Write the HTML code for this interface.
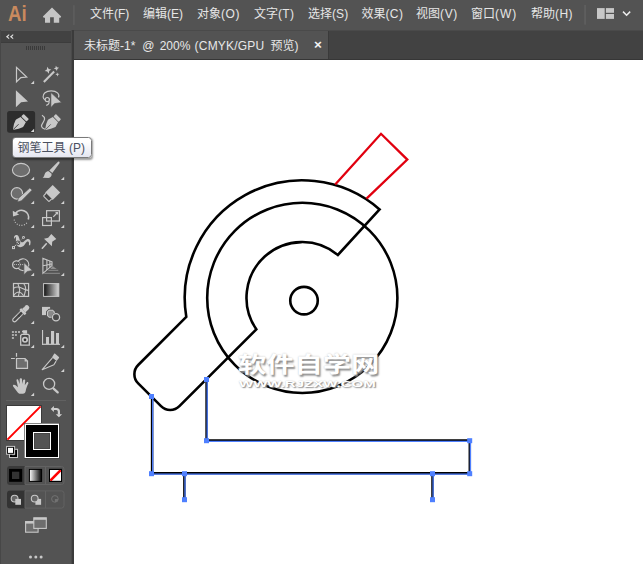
<!DOCTYPE html>
<html lang="zh-CN">
<head>
<meta charset="utf-8">
<title>未标题-1* @ 200% (CMYK/GPU 预览)</title>
<style>
html,body{margin:0;padding:0;}
body{width:643px;height:564px;overflow:hidden;background:#fff;position:relative;
 font-family:"Liberation Sans","Noto Sans CJK SC",sans-serif;}
.abs{position:absolute;}
#menubar{left:0;top:0;width:643px;height:30px;background:#535353;}
#tabbar{left:0;top:30px;width:643px;height:30px;background:#424242;}
#tabline{left:74px;top:59px;width:569px;height:1px;background:#363636;}
#tab{left:74px;top:31px;width:254px;height:28px;background:#535353;}
#tabsep{left:328px;top:31px;width:1px;height:28px;background:#3a3a3a;}
#tools{left:0;top:30px;width:72px;height:534px;background:#535353;}
#toolhead{left:0;top:31px;width:72px;height:11px;background:#424242;}
#toolheadline{left:0;top:42px;width:72px;height:1px;background:#3c3c3c;}
#toolleft{left:0;top:30px;width:1px;height:534px;background:#474747;}
#toolright1{left:71px;top:30px;width:1px;height:534px;background:#4a4a4a;}
#toolright2{left:72px;top:30px;width:2px;height:534px;background:#3b3b3b;}
#topline{left:0;top:30px;width:643px;height:1px;background:#4a4a4a;}
.menu{position:absolute;top:0;height:30px;line-height:28px;font-size:12px;color:#e6e6e6;white-space:nowrap;}
#title{left:84px;top:33px;height:28px;line-height:27px;font-size:12px;color:#e8e8e8;white-space:nowrap;width:230px;}
#title span{position:absolute;top:0;}
#close{left:312px;top:31px;width:12px;height:28px;line-height:27px;font-size:13.5px;color:#f4f4f4;text-align:center;font-weight:bold;}
#ai{left:8.4px;top:0;height:30px;line-height:27px;font-size:22px;color:#c98a5e;transform-origin:0 50%;transform:scaleX(0.85);font-weight:bold;}
#tip{left:12px;top:137.3px;width:77.5px;height:18.7px;background:linear-gradient(#ffffff 20%,#e5e6f0);border:1px solid #7a7a7a;border-radius:3.5px;
 box-shadow:1px 1.5px 2px rgba(0,0,0,0.4);font-size:12px;line-height:19.5px;color:#4a5060;white-space:nowrap;}
#tip span{position:absolute;left:4.6px;top:0.4px;}
#wm1{left:238.2px;top:350px;font-size:22px;line-height:30px;color:#fff;white-space:nowrap;transform-origin:0 0;transform:scaleX(1.283);
 text-shadow:1.2px 1.5px 1.5px #8f8f8f,0 0 1.5px #c4c4c4;font-weight:700;}
#wm2{left:239.3px;top:377.6px;font-size:9px;line-height:12px;color:#fff;white-space:nowrap;transform-origin:0 0;transform:scaleX(1.667);
 text-shadow:0.8px 1px 1px #8f8f8f,0 0 1.2px #c4c4c4;font-weight:bold;}
svg{position:absolute;left:0;top:0;}
</style>
</head>
<body>
<div class="abs" id="menubar"></div>
<div class="abs" id="tabbar"></div>
<div class="abs" id="topline"></div>
<div class="abs" id="tab"></div>
<div class="abs" id="tabsep"></div>
<div class="abs" id="tabline"></div>
<div class="abs" id="tools"></div>
<div class="abs" id="toolhead"></div>
<div class="abs" id="toolheadline"></div>
<div class="abs" id="toolleft"></div>
<div class="abs" id="toolright1"></div>
<div class="abs" id="toolright2"></div>

<div class="abs" id="ai">Ai</div>
<div class="menu" style="left:90px">文件<span style="letter-spacing:0px">(F)</span></div>
<div class="menu" style="left:143px">编辑<span style="letter-spacing:0px">(E)</span></div>
<div class="menu" style="left:197px">对象<span style="letter-spacing:0.6px">(O)</span></div>
<div class="menu" style="left:254px">文字<span style="letter-spacing:0.3px">(T)</span></div>
<div class="menu" style="left:308px">选择<span style="letter-spacing:0.1px">(S)</span></div>
<div class="menu" style="left:361.5px">效果<span style="letter-spacing:0.35px">(C)</span></div>
<div class="menu" style="left:416.1px">视图<span style="letter-spacing:0.6px">(V)</span></div>
<div class="menu" style="left:471.1px">窗口<span style="letter-spacing:0.9px">(W)</span></div>
<div class="menu" style="left:531px">帮助<span style="letter-spacing:0.45px">(H)</span></div>
<div class="abs" id="title"><span style="left:0">未标题-1*</span> <span style="left:58.2px">@</span> <span style="left:75.7px">200%</span> <span style="left:110.6px;letter-spacing:0.2px">(CMYK/GPU</span> <span style="left:186.4px">预览)</span></div>
<div class="abs" id="close">×</div>

<!-- ARTWORK -->
<svg id="art" width="643" height="564" viewBox="0 0 643 564" fill="none">
 <g stroke="#000" stroke-width="2.6" fill="none" stroke-linejoin="miter">
  <circle cx="302.3" cy="297.9" r="95.1"/>
  <circle cx="304" cy="300.6" r="13.75"/>
  <path d="M186.3 316.9 A117.5 117.5 0 0 1 379.6 209.4 L337.9 255.0 A55.7 55.7 0 0 0 256.3 329.3 L179.4 406.2 A13 13 0 0 1 161.0 406.2 L138.2 383.4 A13 13 0 0 1 138.2 365.0 Z"/>
  <path stroke-width="2.5" d="M206.6 380 V440.6 H469.8 V473.3 H152.1 V396.5 M184.4 473.3 V499.5 M432.5 473.3 V499.5"/>
 </g>
 <path d="M335.2 184.6 L381 133.8 L407.3 159.6 L366.5 198.7" stroke="#e1000f" stroke-width="2.3" fill="none"/>
 <g stroke="#4f80ff" stroke-width="1.3" fill="none" transform="translate(0.6 0.8)">
  <path d="M206.6 380 V440.6 H469.8 V473.3 H152.1 V396.5 M184.4 473.3 V499.5 M432.5 473.3 V499.5"/>
 </g>
 <g fill="#4f80ff">
  <rect x="204" y="377" width="5" height="5"/>
  <rect x="204" y="438.2" width="5" height="5"/>
  <rect x="467.2" y="438.2" width="5" height="5"/>
  <rect x="467.2" y="471.2" width="5" height="5"/>
  <rect x="149" y="471.2" width="5" height="5"/>
  <rect x="149" y="394" width="5" height="5"/>
  <rect x="182" y="471.2" width="5" height="5"/>
  <rect x="182" y="497.2" width="5" height="5"/>
  <rect x="430" y="471.2" width="5" height="5"/>
  <rect x="430" y="497.2" width="5" height="5"/>
 </g>
</svg>

<div class="abs" id="wm1">软件自学网</div>
<div class="abs" id="wm2">WWW.RJZXW.COM</div>

<!-- UI ICONS -->
<svg id="ui" width="643" height="564" viewBox="0 0 643 564" fill="none">
 <!-- menubar icons -->
 <path fill="#c6c6c6" d="M52 7.5 L61.2 16.5 L60.4 17.7 L59.2 17.7 L59.2 22.7 L53.8 22.7 L53.8 17.2 L50.1 17.2 L50.1 22.7 L45 22.7 L45 17.7 L43.7 17.7 L42.9 16.5 Z"/>
 <rect x="73.3" y="5.3" width="1.2" height="19.6" fill="#626262"/>
 <rect x="584.4" y="5" width="1.4" height="19.6" fill="#626262"/>
 <g fill="#c8c8c8">
  <rect x="597" y="8.1" width="7.7" height="10.8"/>
  <rect x="605.9" y="8.1" width="8.1" height="4.7"/>
  <rect x="605.9" y="14" width="8.1" height="4.9"/>
 </g>
 <path d="M623 11.6 L626.6 15.2 L630.2 11.6" stroke="#ececec" stroke-width="1.5" fill="none"/>
 <!-- collapse chevrons + grip -->
 <path d="M9.2 34.1 L5.9 36.7 L9.2 39.3 L9.2 37.9 L7.8 36.7 L9.2 35.5 Z M13.2 34.1 L9.9 36.7 L13.2 39.3 L13.2 37.9 L11.8 36.7 L13.2 35.5 Z" fill="#dedede"/>
 <g fill="#3a3a3a">
  <rect x="26" y="46" width="1" height="4"/><rect x="28" y="46" width="1" height="4"/><rect x="30" y="46" width="1" height="4"/><rect x="32" y="46" width="1" height="4"/><rect x="34" y="46" width="1" height="4"/>
  <rect x="36" y="46" width="1" height="4"/><rect x="38" y="46" width="1" height="4"/><rect x="40" y="46" width="1" height="4"/><rect x="42" y="46" width="1" height="4"/><rect x="44" y="46" width="1" height="4"/>
 </g>

 <!-- flyout triangles -->
 <g fill="#d2d2d2">
  <path d="M34.1 80.7V84H30.8Z"/><path d="M34.1 128.7V132H30.8Z"/>
  <path d="M34.1 176.7V180H30.8Z"/><path d="M64.2 176.7V180H60.9Z"/>
  <path d="M34.1 200.7V204H30.8Z"/><path d="M64.2 200.7V204H60.9Z"/>
  <path d="M34.1 224.7V228H30.8Z"/><path d="M64.2 224.7V228H60.9Z"/>
  <path d="M34.1 248.7V252H30.8Z"/><path d="M64.2 248.7V252H60.9Z"/>
  <path d="M34.1 272.7V276H30.8Z"/><path d="M64.2 272.7V276H60.9Z"/>
  <path d="M34.1 320.7V324H30.8Z"/>
  <path d="M34.1 344.7V348H30.8Z"/><path d="M64.2 344.7V348H60.9Z"/>
  <path d="M64.2 368.7V372H60.9Z"/>
  <path d="M34.1 392.7V396H30.8Z"/>
 </g>

 <!-- row1: selection, magic wand -->
 <path d="M16.5 67.3 L16.5 81.8 L20.9 77.6 L26.7 77.1 Z" stroke="#c8c8c8" stroke-width="1.2" stroke-linejoin="miter"/>
 <g fill="#c8c8c8">
  <path d="M43.1 81.3 L53.4 70.8 L54.9 72.3 L44.6 82.8 Z"/>
  <path d="M48 66.6 L49 69.2 L51.4 70.2 L49 71.2 L48 73.8 L47 71.2 L44.6 70.2 L47 69.2 Z" transform="rotate(-12 48 70.2)"/>
  <path d="M56.4 65.6 L57.2 67.5 L59.1 68.3 L57.2 69.1 L56.4 71 L55.6 69.1 L53.7 68.3 L55.6 67.5 Z" transform="rotate(-12 56.4 68.3)"/>
  <path d="M57.4 72.2 L58 73.8 L59.6 74.4 L58 75 L57.4 76.6 L56.8 75 L55.2 74.4 L56.8 73.8 Z" transform="rotate(-12 57.4 74.4)"/>
 </g>
 <!-- row2: direct select, lasso -->
 <path d="M15.9 90.3 L15.9 107.2 L21.1 102.2 L28 101.4 Z" fill="#c8c8c8"/>
 <g stroke="#c8c8c8" stroke-width="1.2" fill="none">
  <path d="M58.5 97.5 C60 94 56.8 90.9 51.2 90.9 C45.6 90.9 42.8 94 43.1 97 C43.3 98.6 44.2 99.6 45.2 99.8"/>
  <circle cx="47.3" cy="99.6" r="2.1"/>
  <path d="M48.9 101.2 C49.6 103.2 48.2 104.9 46.2 105.4"/>
 </g>
 <path d="M50.9 92.6 L50.9 107.5 L54.6 103.6 L61.6 102.5 Z" fill="#c8c8c8" stroke="#535353" stroke-width="0.6"/>
 <!-- row3: pen (selected), curvature -->
 <rect x="7.1" y="111" width="28" height="21.8" rx="2.5" fill="#2d2d2d"/>
 <g transform="translate(13.2 129.6) rotate(-45)" fill="#c8c8c8">
  <path d="M0.2 -0.5 Q4.6 -4 8.3 -5 Q9 -5.3 9.7 -5 L14.2 -3.7 L14.2 3.7 L9.7 5 Q9 5.3 8.3 5 Q4.6 4 0.2 0.5 Z"/>
  <rect x="15" y="-3.7" width="3.5" height="7.4" rx="0.8"/>
  <path d="M0.5 0 L7.6 0" stroke="#2d2d2d" stroke-width="0.8"/>
 </g>
 <path d="M34.1 128.7V132H30.8Z" fill="#d8d8d8"/>
 <g transform="translate(45.4 129.7) rotate(-45)" fill="#c8c8c8">
  <path d="M0.2 -0.5 Q4.6 -4 8.3 -5 Q9 -5.3 9.7 -5 L14.2 -3.7 L14.2 3.7 L9.7 5 Q9 5.3 8.3 5 Q4.6 4 0.2 0.5 Z"/>
  <rect x="15" y="-3.7" width="3.5" height="7.4" rx="0.8"/>
  <path d="M0.5 0 L7.6 0" stroke="#535353" stroke-width="0.8"/>
 </g>
 <path d="M42 115.3 C43.5 116.2 44.8 117.2 44.6 119 C44.2 122 41.3 124 41.5 126.2 C41.7 128 43.5 128.7 45 129.3" stroke="#c8c8c8" stroke-width="1.2"/>
 <!-- row4: ellipse, brush -->
 <ellipse cx="21" cy="170" rx="8.6" ry="6.6" fill="#6e6e6e" stroke="#c8c8c8" stroke-width="1.1"/>
 <g fill="#c8c8c8">
  <path d="M58.8 161.6 C59.6 161.8 59.8 162.8 59.3 163.6 L52.3 173 L49.3 170.5 L57.5 162.2 C58 161.7 58.4 161.5 58.8 161.6 Z"/>
  <path d="M48.7 171.2 L51.6 173.8 C52 175.9 50.6 177.9 48.5 177.9 L42.6 177.7 C44.5 176.5 44.2 174.6 45.2 173 C46.1 171.6 47.5 171.1 48.7 171.2 Z"/>
 </g>
 <!-- row5: shaper, eraser -->
 <circle cx="16.9" cy="193.4" r="5.7" fill="#6e6e6e" stroke="#c8c8c8" stroke-width="1.2"/>
 <path d="M29.8 187.9 L32.2 190.1 L21.6 200.7 L17.5 202.1 L18.2 198.4 Z" fill="#c8c8c8" stroke="#535353" stroke-width="0.7"/>
 <g transform="translate(52.7 192.4) rotate(-45)">
  <rect x="-5.3" y="-5.3" width="10.6" height="10.6" fill="#c8c8c8"/>
  <path d="M-5.3 -4.1 L-8.2 -4.1 Q-9.2 -4.1 -9.2 -3.1 L-9.2 2.9 Q-9.2 3.9 -8.2 3.9 L-5.3 3.9" fill="#474747" stroke="#c8c8c8" stroke-width="1.1"/>
 </g>
 <!-- row6: rotate, scale -->
 <path d="M15.4 213.6 A7.2 7.2 0 0 1 28.3 219.6" stroke="#c8c8c8" stroke-width="1.7"/>
 <path d="M12.8 210.7 L13 216.4 L19.2 214.6 Z" fill="#c8c8c8"/>
 <path d="M14.2 219.6 A7.2 7.2 0 0 0 27.4 222" stroke="#c8c8c8" stroke-width="1.1" stroke-dasharray="1 1.5"/>
 <g stroke="#c8c8c8" stroke-width="1.2">
  <rect x="46.6" y="210.7" width="12.8" height="10.3"/>
  <rect x="42.6" y="217.6" width="8.8" height="7.9"/>
  <path d="M53.3 216.8 L57 213"/>
 </g>
 <path d="M55 212 L58.1 212 L58.1 215.1 Z" fill="#c8c8c8"/>
 <!-- row7: width, pin -->
 <path fill="#c8c8c8" d="M14 238.4 C13.7 236 15.2 234.7 16.7 235 C19.2 235.5 19.2 239 20.2 241 C21.2 243 23 242.5 25 240.4 C26.6 238.8 28.8 238.2 30 240 C31 241.5 30.5 243.5 30.1 245.2 L28.9 245.2 C29.2 243.2 29 241.6 27.8 241.6 C26 241.6 25.5 244.3 23.5 246 C21.5 247.7 18 247.6 16.6 245 C15.2 242.2 16.6 238 15.5 237 C15 236.6 14.8 237.6 14.7 238.6 Z"/>
 <path d="M13.4 247.5 L23.4 237.5" stroke="#c8c8c8" stroke-width="0.9"/>
 <path d="M19.5 241.2 L22.5 238.3" stroke="#4a4a4a" stroke-width="0.9"/>
 <circle cx="17.9" cy="242.9" r="1.9" fill="#c8c8c8" stroke="#3c3c3c" stroke-width="0.9"/>
 <path d="M16.7 244.1 L19.1 241.7" stroke="#3c3c3c" stroke-width="0.9"/>
 <rect x="12" y="246.1" width="3" height="3" fill="#c8c8c8"/><rect x="13" y="247.1" width="1" height="1" fill="#555"/>
 <circle cx="23.5" cy="237.4" r="1.4" fill="#c8c8c8"/><circle cx="23.5" cy="237.4" r="0.5" fill="#555"/>
 <path d="M51.3 233.9 L56.3 238.9 L52.2 241.8 L51.9 246.2 L44 238.8 L48.2 237.8 Z" fill="#c8c8c8"/>
 <path d="M46.3 243.8 L42.3 248.2" stroke="#c8c8c8" stroke-width="1.6" stroke-linecap="round"/>
 <!-- row8: shape builder, perspective grid -->
 <circle cx="16.4" cy="264.7" r="3.9" stroke="#8c8c8c" stroke-width="0.9"/>
 <path d="M19.1 258.9 A5.9 5.9 0 1 1 19.1 270.1 A3.9 3.9 0 1 1 19.1 258.9 Z" transform="translate(-0.3 0)" stroke="#c8c8c8" stroke-width="1.1" fill="none" display="none"/>
 <path d="M18.2 261.2 A3.9 3.9 0 1 0 18.2 268.2 A5.9 5.9 0 1 0 18.2 261.2 Z" stroke="#c8c8c8" stroke-width="1.1"/>
 <path d="M13.8 264.6 H23.2" stroke="#c8c8c8" stroke-width="1" stroke-dasharray="1 1.1"/>
 <path d="M23.9 262.6 L23.9 274.8 L27.3 271.5 L32.5 270.5 Z" fill="#c8c8c8" stroke="#535353" stroke-width="0.7"/>
 <g stroke="#8e8e8e" stroke-width="1">
  <path d="M44.2 273.3 H59.9 M48.4 270.3 H58.3"/>
 </g>
 <path d="M50.4 268.9 L52.6 266 L56.7 268.9 Z" fill="#8e8e8e"/>
 <g stroke="#c8c8c8" stroke-width="1.1">
  <path d="M42.9 258.4 L42.9 273.3 L52 265.6 L52 261.8 Z"/>
  <path d="M42.9 265.7 L52 264 M46.9 259.9 V269.9 M49.9 261 V267.4"/>
 </g>
 <!-- row9: mesh, gradient -->
 <g stroke="#c8c8c8" stroke-width="1.1">
  <rect x="13.5" y="283.5" width="15.1" height="12.9" stroke-width="1.2"/>
  <path d="M18 283.5 C18.6 287 20.5 289.5 19.5 292 C19 293.5 18.3 295 18.5 296.4"/>
  <path d="M23.7 283.5 C25.5 286 26 290 25 292.5 C24.6 294 24.2 295.3 24.1 296.4"/>
  <path d="M13.5 288.2 C16 286.8 19 286.8 21.5 288 C23.5 289 25.5 290.4 28.6 290.4"/>
  <path d="M13.8 295.5 C15 293.5 17 292 19.2 292 C21 292.3 22.5 294 23.6 295.6"/>
 </g>
 <defs>
  <linearGradient id="g1" x1="0" x2="1" y1="0" y2="0"><stop offset="0" stop-color="#111"/><stop offset="1" stop-color="#d6d6d6"/></linearGradient>
  <linearGradient id="g2" x1="0" x2="1" y1="0" y2="0"><stop offset="0" stop-color="#fff"/><stop offset="1" stop-color="#000"/></linearGradient>
 </defs>
 <rect x="43.6" y="283.6" width="15.2" height="12.8" fill="url(#g1)" stroke="#c8c8c8" stroke-width="1"/>
 <!-- row10: eyedropper, blend -->
 <g transform="translate(13.1 321.4) rotate(-45)">
  <path d="M13 -1.8 L2 -1.8 A1.8 1.8 0 0 0 2 1.8 L13 1.8" stroke="#c8c8c8" stroke-width="1.1" fill="#474747"/>
  <path d="M8 -1.3 V1.3 M9.6 -1.3 V1.3 M11.2 -1.3 V1.3" stroke="#2e2e2e" stroke-width="0.7"/>
  <rect x="12.6" y="-3.8" width="2.6" height="7.6" rx="0.6" fill="#c8c8c8"/>
  <rect x="15" y="-2.4" width="3" height="4.8" fill="#c8c8c8"/>
  <ellipse cx="19.3" cy="0" rx="2.6" ry="2.5" fill="#c8c8c8"/>
 </g>
 <rect x="42" y="306.9" width="8.1" height="8.2" fill="#c8c8c8"/>
 <path d="M49.2 309.9 H52.6 L54.6 311.9 V315.6 L52.6 317.6 H49.2 L47.2 315.6 V311.9 Z" fill="#8a8a8a" stroke="#535353" stroke-width="2.4"/>
 <path d="M49.2 310.2 H52.6 L54.3 311.9 V315.6 L52.6 317.3 H49.2 L47.5 315.6 V311.9 Z" fill="#8a8a8a" stroke="#c8c8c8" stroke-width="1.1"/>
 <circle cx="56" cy="317.2" r="4.4" fill="#535353"/>
 <circle cx="56" cy="317.2" r="3.6" fill="#4a4a4a" stroke="#c8c8c8" stroke-width="1.3"/>
 <!-- row11: symbol sprayer, graph -->
 <g fill="#ababab">
  <rect x="11.9" y="331" width="2" height="2"/><rect x="14.9" y="331" width="2" height="2"/><rect x="18" y="331" width="2" height="2"/>
  <rect x="11.9" y="334" width="2" height="2"/><rect x="14.9" y="334" width="2" height="2"/>
  <rect x="11.9" y="337" width="2" height="2"/>
 </g>
 <path d="M22 331 L23.2 330.2 H27.1 V333.8 H23.2 V332.4 L22 332.2 Z" fill="#c8c8c8"/>
 <path d="M20.7 335.4 L22 334.3 H28 L29.3 335.4 V345.2 H20.7 Z" stroke="#c8c8c8" stroke-width="1.3" fill="#474747"/>
 <circle cx="25" cy="339.8" r="2.2" stroke="#c8c8c8" stroke-width="1.7" fill="#333"/>
 <g fill="#c8c8c8">
  <rect x="42" y="330" width="1.1" height="14.9"/><rect x="42" y="343.7" width="18" height="1.2"/>
  <rect x="46" y="337" width="3" height="7"/><rect x="51" y="331" width="3.1" height="13"/><rect x="56" y="333" width="3" height="11"/>
 </g>
 <!-- row12: artboard, slice -->
 <path d="M16.5 358.5 H25 L27.5 361 V368.3 H16.5 Z" fill="#6e6e6e" stroke="#c8c8c8" stroke-width="1.2"/>
 <path d="M24.6 358.3 L27.7 361.4 H24.6 Z" fill="#c8c8c8"/>
 <path d="M16.5 353 V356.8 M11 358.5 H14.9" stroke="#c8c8c8" stroke-width="1.2"/>
 <path d="M54.3 353.5 Q54.7 353.3 55.2 353.8 L58.9 357.1 Q59.3 357.6 59 358 L56.5 361.1 L51.9 357.5 Z" fill="#c8c8c8"/>
 <path d="M52.4 357.8 L42.2 369.7 L53.9 364.8 L56.1 361.1" stroke="#c8c8c8" stroke-width="1.1" fill="#474747" stroke-linejoin="round"/>
 <!-- row13: hand, zoom -->
 <path fill="#c8c8c8" d="M13 385.2 C13.6 384.5 14.8 384.7 15.6 385.3 L18 387.2 L16.5 380.5 C16.3 379.3 17.9 378.8 18.3 379.9 L19.6 384 L19.7 379.2 C19.7 377.9 21.9 377.9 22 379.2 L22.3 384 L23.1 380.2 C23.4 379 25.3 379.3 25.2 380.5 L24.8 385.2 L26.7 382.5 C27.4 381.6 28.8 382.4 28.3 383.6 C27.1 386 26.1 388.5 25.7 391 C25.5 392.6 24.5 393.8 22.8 393.8 L20.5 393.8 C19 393.8 18 393 17 391.5 L13.2 386.4 C12.9 386 12.8 385.5 13 385.2 Z"/>
 <circle cx="49.1" cy="383.9" r="5.55" stroke="#c8c8c8" stroke-width="1.3"/>
 <path d="M53.6 388.7 L57.7 392.4" stroke="#c8c8c8" stroke-width="2.3" stroke-linecap="round"/>

 <!-- separator -->
 <rect x="6" y="400" width="60" height="1" fill="#616161"/>
 <!-- fill / stroke swatches -->
 <rect x="6.5" y="405.5" width="35" height="35" fill="#fff" stroke="#3a3a3a" stroke-width="1"/>
 <path d="M7.4 439.6 L40.6 406.4" stroke="#ff0000" stroke-width="2"/>
 <rect x="24" y="423" width="35.6" height="35.6" fill="#3a3a3a"/>
 <rect x="24.6" y="423.6" width="34.4" height="34.4" fill="#fff"/>
 <rect x="26" y="425" width="32" height="32" fill="#000"/>
 <rect x="33" y="432" width="18" height="18" fill="#fff"/>
 <rect x="34" y="433" width="16" height="16" fill="#454545"/>
 <rect x="35" y="434" width="14" height="14" fill="#535353"/>
 <!-- swap arrows -->
 <path d="M53.5 409 H56.3 Q58.9 409 58.9 411.6 V414.6" stroke="#d0d0d0" stroke-width="2.2"/>
 <path d="M50.7 409 L53.9 406.1 V411.9 Z M55.8 414.3 H62.1 L58.9 417.3 Z" fill="#d0d0d0"/>
 <!-- default fill/stroke -->
 <rect x="9" y="448.8" width="9" height="9.2" fill="#c8c8c8"/>
 <rect x="10" y="449.8" width="7" height="7.2" fill="#000"/>
 <path d="M12.2 454.7 H14.6 V452.5" stroke="#d8d8d8" stroke-width="0.7"/>
 <rect x="6.1" y="445.9" width="9" height="8.8" fill="#c8c8c8"/>
 <rect x="7.1" y="446.9" width="7" height="6.9" fill="#000"/>
 <rect x="8" y="447.8" width="5" height="5.1" fill="#fff"/>
 <!-- color / gradient / none -->
 <rect x="7.5" y="466.5" width="56.5" height="18" rx="2.5" fill="#535353" stroke="#626262"/>
 <path d="M10 466 H25 V485 H10 Q7 485 7 482 V469 Q7 466 10 466 Z" fill="#3a3a3a"/>
 <path d="M25 466.5 V484.5 M45.5 466.5 V484.5" stroke="#626262"/>
 <rect x="9.1" y="468.9" width="13.1" height="12.9" fill="#000"/>
 <rect x="12" y="471.7" width="7.3" height="7.3" fill="#333"/>
 <rect x="29.4" y="469.4" width="12.2" height="12" fill="url(#g2)" stroke="#000"/>
 <rect x="49.5" y="469.4" width="12" height="12" fill="#fff" stroke="#000"/>
 <path d="M50.3 480.6 L60.7 470.2" stroke="#ff0000" stroke-width="2.6"/>
 <rect x="49.5" y="469.4" width="12" height="12" fill="none" stroke="#000"/>
 <!-- drawing modes -->
 <rect x="7.5" y="490.9" width="56.5" height="17.2" rx="2.5" fill="#535353" stroke="#626262"/>
 <path d="M10 490.4 H25 V508.6 H10 Q7 508.6 7 505.6 V493.4 Q7 490.4 10 490.4 Z" fill="#333"/>
 <path d="M25 490.9 V508.1 M45.5 490.9 V508.1" stroke="#626262"/>
 <circle cx="14.6" cy="498.6" r="3.4" fill="#666" stroke="#c8c8c8" stroke-width="1.1"/>
 <rect x="15.3" y="498.9" width="5.7" height="5.9" fill="#c8c8c8"/>
 <rect x="35.4" y="498.9" width="5.7" height="5.9" fill="#c8c8c8"/>
 <circle cx="34.7" cy="498.6" r="3.4" fill="#666" stroke="#c8c8c8" stroke-width="1.1"/>
 <circle cx="54.9" cy="498.9" r="3.3" stroke="#727272" stroke-width="1"/>
 <path d="M54.9 498.9 H58.2 A3.3 3.3 0 0 1 54.9 502.2 Z" fill="#727272"/>
 <!-- screen mode -->
 <rect x="25.6" y="521.6" width="12.5" height="10.6" fill="#6e6e6e" stroke="#c8c8c8" stroke-width="1.1"/>
 <rect x="25.6" y="521.6" width="12.5" height="2" fill="#c8c8c8"/>
 <rect x="33.8" y="517.8" width="12.5" height="10.6" fill="#6e6e6e" stroke="#c8c8c8" stroke-width="1.1"/>
 <rect x="33.8" y="517.8" width="12.5" height="2" fill="#c8c8c8"/>
 <!-- more dots -->
 <g fill="#c8c8c8"><circle cx="30.5" cy="557" r="1.5"/><circle cx="35.8" cy="557" r="1.5"/><circle cx="41.1" cy="557" r="1.5"/></g>
</svg>

<div class="abs" id="tip"><span>钢笔工具 (P)</span></div>
</body>
</html>
